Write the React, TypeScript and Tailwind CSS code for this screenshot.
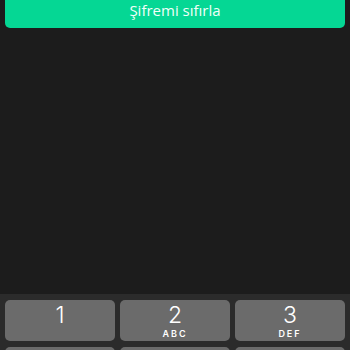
const keys = [
  { d: "1", l: "" },
  { d: "2", l: "ABC" },
  { d: "3", l: "DEF" },
];

export default function App() {
  return (
    <div className="flex h-[350px] w-[350px] flex-col overflow-hidden bg-[#1c1c1c] font-['Open_Sans',sans-serif]">
      <div className="px-[5px]">
        <button className="flex h-[28px] w-full items-center justify-center rounded-b-[5px] bg-[#05d794] pb-[7px] text-[15px] leading-none text-[#f2fff9]">
          Şifremi sıfırla
        </button>
      </div>
      <div className="flex-1" />
      <div className="grid h-[56px] shrink-0 grid-cols-3 gap-x-[5px] gap-y-[6px] bg-[#2b2b2b] px-[5px] pt-[6px]">
        {keys.map((k) => (
          <div
            key={k.d}
            className="flex h-[41px] flex-col items-center rounded-[5px] bg-[#6b6b6b] pt-[2px] text-white"
          >
            <span className="font-['Inter',sans-serif] text-[23px] font-light leading-[27px]">{k.d}</span>
            {k.l && (
              <span className="font-['Inter',sans-serif] text-[9px] font-semibold leading-none tracking-[2px]">
                {k.l}
              </span>
            )}
          </div>
        ))}
        {/* next row, only its top edge is visible */}
        <div className="h-[41px] rounded-[5px] bg-[#6b6b6b]" />
        <div className="h-[41px] rounded-[5px] bg-[#6b6b6b]" />
        <div className="h-[41px] rounded-[5px] bg-[#6b6b6b]" />
      </div>
    </div>
  );
}
